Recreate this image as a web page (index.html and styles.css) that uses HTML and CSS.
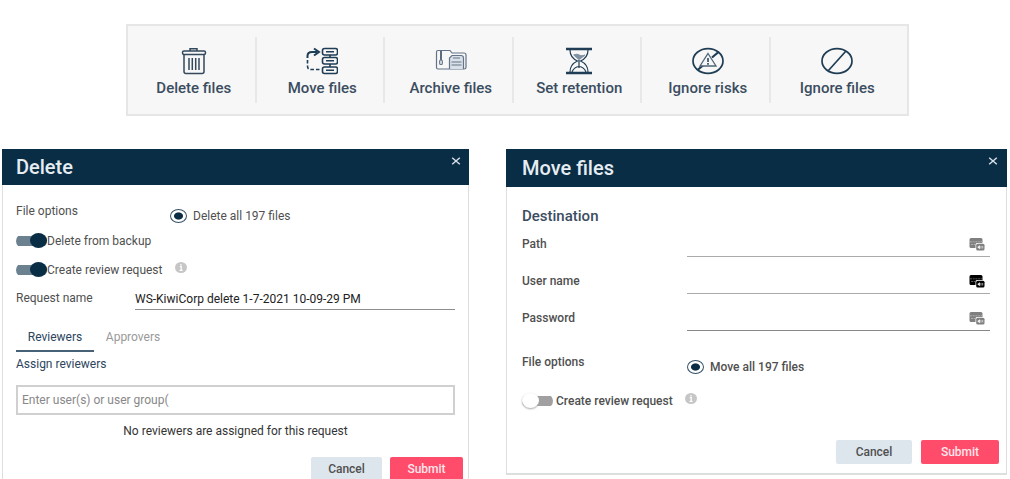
FILE: index.html
```
<!DOCTYPE html>
<html lang="en">
<head>
<meta charset="utf-8">
<title>File actions</title>
<link rel="stylesheet" href="styles.css">
</head>
<body>
<svg class="defs" aria-hidden="true">
  <symbol id="card-key" viewBox="0 0 16 13">
    <path d="M2 0H12Q13.500 0 13.500 1.500V5H8Q6.500 5 6.500 6.500V10H2Q0.500 10 0.500 8.500V1.500Q0.500 0 2 0Z" fill="currentColor"/>
    <path d="M1 3.800H13M2 6.500H6" stroke="#fff" stroke-opacity=".6" stroke-width=".6" stroke-dasharray="2 .7"/>
    <rect x="7.200" y="5.800" width="8.300" height="6.800" rx="1.500" fill="currentColor"/>
    <path d="M8.700 9.200l2-1.500v3zM12 8v2.500M13.700 8v2.500" stroke="#fff" stroke-width=".6" fill="#fff"/>
  </symbol>
  <symbol id="info" viewBox="0 0 12 11">
    <ellipse cx="6" cy="5.500" rx="6" ry="5.500" fill="#c6c6c6"/>
    <path d="M6 2v1.400M4.800 4.700H6.200V8M4.600 8.300H7.600" stroke="#fff" stroke-width="1.200" fill="none"/>
  </symbol>
  <symbol id="close" viewBox="0 0 10 8">
    <path d="M1.200 0.800L8.800 7.200M8.800 0.800L1.200 7.200" stroke="#d5dfe6" stroke-width="1.500"/>
  </symbol>
</svg>

<nav class="toolbar" aria-label="File actions">
  <button class="action" type="button">
    <svg class="action-icon" viewBox="0 0 32 28" fill="none" stroke="#34495e" stroke-width="1.500">
      <path d="M12 4V1.700H19V4"/><rect x="4.500" y="4" width="23" height="3.500" rx="1.500"/>
      <path d="M6 7.500V24.500Q6 26.500 8 26.500H24Q26 26.500 26 24.500V7.500M11 11V23M14.300 11V23M17.700 11V23M21 11V23"/>
    </svg>
    <span>Delete files</span>
  </button>
  <button class="action" type="button">
    <svg class="action-icon" viewBox="0 0 32 28" fill="none" stroke="#1f3d54" stroke-width="1.600">
      <path d="M1.500 11V9Q1.500 5 6 5H11M8 1.500L13 5L8 8.500" stroke-width="2"/>
      <path d="M1.500 13V19Q1.500 22.500 5 22.500H15" stroke-dasharray="3.500 2"/>
      <rect x="16.500" y="1.500" width="15" height="6.500" rx="2"/><rect x="16.500" y="10.500" width="15" height="6.500" rx="2"/><rect x="16.500" y="20" width="15" height="6.500" rx="2"/>
      <path d="M20 4.800H28M20 13.800H28M20 23.300H28M24 8V10.500M24 17V20"/>
    </svg>
    <span>Move files</span>
  </button>
  <button class="action" type="button">
    <svg class="action-icon" viewBox="0 0 32 28" fill="none" stroke="#637488" stroke-width="1.200">
      <path d="M3 3.500H15L17 6H29Q31 6 31 8V20.500Q31 22 29 22H3Q1.500 22 1.500 20.500V5Q1.500 3.500 3 3.500Z"/>
      <path d="M6 4V13" stroke="#34495e" stroke-width="1.600"/><rect x="4.700" y="13" width="2.600" height="4.500" rx="1"/>
      <path d="M14.500 22V11L17 8.500H26Q28.500 8.500 28.500 11V22" fill="#d9e0e8"/>
      <path d="M18 11H25M16.500 15H26.500M16.500 18H26.500"/>
    </svg>
    <span>Archive files</span>
  </button>
  <button class="action" type="button">
    <svg class="action-icon" viewBox="0 0 32 28" fill="none" stroke="#1f3d54" stroke-width="1.200">
      <path d="M3 2H29M3 26H29" stroke-width="2.400"/>
      <path d="M7 3C7 9 10 12 14.500 14C10 16 7 19 7 25M25 3C25 9 22 12 17.500 14C22 16 25 19 25 25"/>
      <path d="M11 8Q14 6.500 16 8Q19 9.500 22 8L16 12.500Z" fill="#8292a2" stroke="#8292a2"/>
      <path d="M16 13V21M9 25Q11 20 16 19.500Q21 20 23 25"/>
    </svg>
    <span>Set retention</span>
  </button>
  <button class="action" type="button">
    <svg class="action-icon" viewBox="0 0 32 28" fill="none" stroke="#1f3d54" stroke-width="1.700">
      <ellipse cx="16" cy="14" rx="15" ry="12.400"/><path d="M26.500 5L20 10.500M11 18.500L5.500 23" stroke-width="2.200"/>
      <path d="M16 6.500L24 19H8Z" fill="#f7f7f7" stroke="#526577" stroke-width="1.300"/><path d="M16 11V15M16 16V17.700" stroke-width="1.500"/>
    </svg>
    <span>Ignore risks</span>
  </button>
  <button class="action" type="button">
    <svg class="action-icon" viewBox="0 0 32 28" fill="none" stroke="#1f3d54" stroke-width="1.700">
      <ellipse cx="16" cy="14" rx="15" ry="12.400"/><path d="M25 4L7 24"/>
    </svg>
    <span>Ignore files</span>
  </button>
</nav>

<main class="panels">
  <section class="panel" aria-labelledby="delete-title">
    <header class="panel-head">
      <h2 id="delete-title">Delete</h2>
      <button class="close" type="button" aria-label="Close"><svg><use href="#close"/></svg></button>
    </header>
    <form class="panel-body">
      <div class="option-row">
        <span class="option-label">File options</span>
        <label class="radio-label"><input class="radio" type="radio" name="delete-scope" checked>Delete all 197 files</label>
      </div>
      <div class="toggle-row">
        <label class="toggle-label"><input class="toggle" type="checkbox" checked>Delete from backup</label>
      </div>
      <div class="toggle-row">
        <label class="toggle-label"><input class="toggle" type="checkbox" checked>Create review request</label>
        <svg class="info"><use href="#info"/></svg>
      </div>
      <div class="name-row">
        <label for="request-name">Request name</label>
        <input class="name-input" id="request-name" type="text" value="WS-KiwiCorp delete 1-7-2021 10-09-29 PM">
      </div>
      <div class="tabs" role="tablist">
        <button class="tab tab-active" type="button" role="tab" aria-selected="true">Reviewers</button>
        <button class="tab" type="button" role="tab" aria-selected="false">Approvers</button>
      </div>
      <label class="assign" for="reviewers">Assign reviewers</label>
      <input class="reviewers" id="reviewers" type="text" placeholder="Enter user(s) or user group(">
      <p class="empty">No reviewers are assigned for this request</p>
      <div class="buttons buttons-delete">
        <button class="btn btn-cancel" type="button">Cancel</button>
        <button class="btn btn-submit" type="button">Submit</button>
      </div>
    </form>
  </section>

  <section class="panel panel-move" aria-labelledby="move-title">
    <header class="panel-head">
      <h2 id="move-title">Move files</h2>
      <button class="close" type="button" aria-label="Close"><svg><use href="#close"/></svg></button>
    </header>
    <form class="panel-body">
      <h3>Destination</h3>
      <div class="fields">
        <label for="path">Path</label>
        <div class="field"><input id="path" type="text"><svg class="key"><use href="#card-key"/></svg></div>
        <label for="user">User name</label>
        <div class="field"><input id="user" type="text"><svg class="key key-dark"><use href="#card-key"/></svg></div>
        <label for="password">Password</label>
        <div class="field field-dark"><input id="password" type="password"><svg class="key"><use href="#card-key"/></svg></div>
      </div>
      <div class="option-row">
        <span class="option-label">File options</span>
        <label class="radio-label"><input class="radio" type="radio" name="move-scope" checked>Move all 197 files</label>
      </div>
      <div class="toggle-row">
        <label class="toggle-label"><input class="toggle" type="checkbox">Create review request</label>
        <svg class="info"><use href="#info"/></svg>
      </div>
      <div class="buttons">
        <button class="btn btn-cancel" type="button">Cancel</button>
        <button class="btn btn-submit" type="button">Submit</button>
      </div>
    </form>
  </section>
</main>
</body>
</html>
```

FILE: styles.css
```
* { box-sizing: border-box; }

body {
  margin: 0;
  padding-top: 24px;
  height: 100vh;
  overflow: hidden;
  background: #fff;
  color: #505050;
  font: 400 12px/16px Roboto, "Liberation Sans", sans-serif;
}

button, input {
  font: inherit;
  color: inherit;
  margin: 0;
  padding: 0;
  border: 0;
  background: none;
}

h2, h3, p { margin: 0; }
svg { display: block; flex: none; }
.defs { position: absolute; width: 0; height: 0; }

.toolbar {
  display: grid;
  grid-template-columns: repeat(6, 1fr);
  margin: 0 101px 0 126px;
  padding: 11px 8px 11px 0;
  border: 2px solid #e6e6e6;
  background: #f7f7f7;
}

.action {
  display: flex;
  flex-direction: column;
  align-items: center;
  gap: 3px;
  height: 66px;
  padding: 10px 0 0 5px;
  border-right: 2px solid #e8e8e8;
  color: #3b4d60;
  font-size: 15px;
  font-weight: 500;
  line-height: 20px;
}

.action:last-child { border-right: 0; }
.action-icon { width: 32px; height: 28px; }

.panels {
  display: grid;
  grid-template-columns: 467fr 501fr;
  align-items: start;
  gap: 37px;
  margin-top: 33px;
  padding: 0 3px 0 2px;
}

.panel { border: 1px solid #dedede; border-top: 0; }

.panel-head {
  display: flex;
  align-items: center;
  justify-content: space-between;
  height: 36px;
  margin: 0 -1px;
  padding: 0 8px 0 14px;
  background: #0a2d46;
  color: #e6edf2;
}

.panel-head h2 {
  font-size: 20px;
  font-weight: 500;
  line-height: 24px;
}

.close { align-self: flex-start; padding-top: 8px; }
.close svg { width: 10px; height: 8px; }

.panel-body { padding: 14px 13px 0; }

.option-row {
  display: grid;
  grid-template-columns: 154px 1fr;
  align-items: start;
  height: 27px;
}

.option-label { padding-top: 4px; }
.radio-label { display: flex; align-items: center; gap: 6px; padding-top: 9px; }

.radio {
  appearance: none;
  width: 17px;
  height: 14px;
  border: 1px solid #365267;
  border-radius: 50%;
  background: radial-gradient(ellipse 5px 4px, #0a2d46 80%, #fff);
}

.toggle-row { display: flex; align-items: center; gap: 12px; height: 29px; }
.toggle-label { display: flex; align-items: center; }

.toggle {
  appearance: none;
  display: flex;
  align-items: center;
  width: 31px;
  height: 14px;
  background: linear-gradient(#6c8190, #6c8190) center / 100% 10px no-repeat;
  border-radius: 7px;
}

.toggle::before {
  content: "";
  width: 17px;
  height: 15px;
  border-radius: 50%;
  background: #fff;
  box-shadow: 0 1px 2px #a8a8a8;
}

.toggle:checked::before {
  margin-left: auto;
  background: #0a2d46;
  box-shadow: none;
}

.info { width: 12px; height: 11px; margin-bottom: 4px; }

.name-row {
  display: grid;
  grid-template-columns: 119px 1fr;
  align-items: end;
  height: 26px;
  line-height: 24px;
}

.name-input {
  width: 100%;
  height: 22px;
  border-bottom: 1px solid #8e8e8e;
  color: #222;
}

.tabs { display: flex; margin-top: 16px; }

.tab {
  height: 26px;
  width: 78px;
  padding-bottom: 2px;
  border-bottom: 2px solid transparent;
  color: #999;
}

.tab-active { border-color: #476277; color: #2c455d; }

.assign { display: block; line-height: 24px; color: #2c455d; }

.reviewers {
  display: block;
  width: 100%;
  height: 30px;
  margin-top: 9px;
  padding: 0 4px;
  border: 2px solid #d0d0d0;
}

.reviewers::placeholder { color: #888; opacity: 1; }

.empty { line-height: 32px; text-align: center; color: #333; }

.buttons {
  display: grid;
  grid-template-columns: 76px 78px;
  justify-content: end;
  gap: 9px;
  margin-right: -8px;
}

.buttons-delete {
  grid-template-columns: 71px 73px;
  gap: 8px;
  margin-top: 10px;
}

.btn { height: 24px; border-radius: 2px; font-weight: 500; }
.btn-cancel { background: #dde5ed; }
.btn-submit { background: #ff4c6b; color: #ffe6eb; }

.panel-move { font-weight: 500; border-bottom-width: 2px; }
.panel-move .panel-head { height: 38px; padding: 0 9px 0 16px; }
.panel-move .panel-body { padding: 17px 16px 9px 15px; }

.panel-move h3 {
  color: #3b4d60;
  font-size: 15px;
  font-weight: 500;
  line-height: 24px;
}

.fields {
  display: grid;
  grid-template-columns: 165px 1fr;
  row-gap: 8px;
  align-items: end;
  margin-bottom: 19px;
  line-height: 26px;
}

.field {
  display: flex;
  align-items: center;
  height: 29px;
  padding: 4px 5px 0 0;
  border-bottom: 1px solid #aaa;
}

.field-dark { border-color: #888; }
.field input { flex: 1; height: 24px; min-width: 0; }
.key { width: 16px; height: 13px; color: #808080; }
.key-dark { color: #000; }

.panel-move .option-row { grid-template-columns: 165px 1fr; margin-bottom: 9px; }
.panel-move .toggle-label { gap: 3px; }
.panel-move .toggle { background-image: linear-gradient(#a0a0a0, #a0a0a0); }
.panel-move .buttons { margin: 25px -9px 0 0; }
```
